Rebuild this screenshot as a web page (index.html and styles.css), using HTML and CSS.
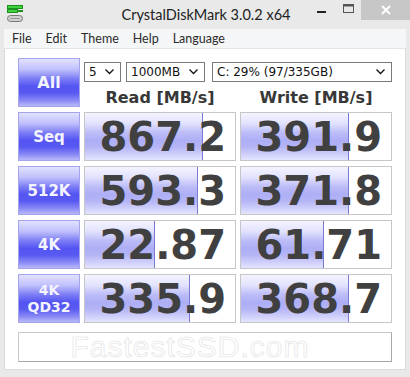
FILE: index.html
```html
<!DOCTYPE html>
<html lang="en">

<head>
  <meta charset="UTF-8">
  <title>CrystalDiskMark 3.0.2 x64</title>
  <link rel="stylesheet" href="styles.css">
</head>

<body>

  <div class="window">

    <!-- title bar -->
    <div class="titlebar">
      <span class="app-icon">
        <svg width="17" height="18" viewBox="0 0 17 18">
          <rect x="0.5" y="0.5" width="15" height="3" fill="#3fd23f" stroke="#1f8f1f" />
          <rect x="0.5" y="4.5" width="10" height="3" fill="#3fd23f" stroke="#1f8f1f" />
          <rect x="11" y="5" width="5" height="2" fill="#1f8f1f" />
          <rect x="0.5" y="10.5" width="15" height="6" rx="3" fill="#d0d0d0" stroke="#777" />
          <rect x="3" y="13" width="10" height="1" fill="#999" />
        </svg>
      </span>
      <span class="title">CrystalDiskMark 3.0.2 x64</span>
      <div class="controls">
        <span class="ctl ctl-min">
          <svg width="10" height="10" viewBox="0 0 10 10"><rect x="0" y="6" width="9" height="2" fill="#222" /></svg>
        </span>
        <span class="ctl ctl-max">
          <svg width="11" height="9" viewBox="0 0 11 9"><rect x="0.5" y="0.5" width="10" height="8" fill="none" stroke="#555" /><rect x="0.5" y="0.5" width="10" height="2" fill="#555" /></svg>
        </span>
        <span class="ctl ctl-close">
          <svg width="10" height="10" viewBox="0 0 10 10"><path d="M1 1L9 9M9 1L1 9" stroke="#fff" stroke-width="2" /></svg>
        </span>
      </div>
    </div>

    <!-- menu -->
    <div class="menubar">
      <span class="menu-item">File</span>
      <span class="menu-item">Edit</span>
      <span class="menu-item">Theme</span>
      <span class="menu-item">Help</span>
      <span class="menu-item">Language</span>
    </div>

    <!-- main panel -->
    <div class="panel">
      <div class="grid">

        <div class="btn btn-all">All</div>
        <div class="head">
          <div class="combos">
            <div class="combo combo-count">5 <svg class="chev" width="9" height="6" viewBox="0 0 9 6"><path d="M0.5 0.5L4.5 4.5L8.5 0.5" fill="none" stroke="#111" stroke-width="1.3" /></svg></div>
            <div class="combo combo-size">1000MB <svg class="chev" width="9" height="6" viewBox="0 0 9 6"><path d="M0.5 0.5L4.5 4.5L8.5 0.5" fill="none" stroke="#111" stroke-width="1.3" /></svg></div>
            <div class="combo combo-drive">C: 29% (97/335GB) <svg class="chev" width="9" height="6" viewBox="0 0 9 6"><path d="M0.5 0.5L4.5 4.5L8.5 0.5" fill="none" stroke="#111" stroke-width="1.3" /></svg></div>
          </div>
          <div class="labels">
            <span class="label">Read [MB/s]</span>
            <span class="label">Write [MB/s]</span>
          </div>
        </div>

        <div class="btn">Seq</div>
        <div class="result"><span class="bar" style="width: 117px"></span><span class="value">867.2</span></div>
        <div class="result"><span class="bar" style="width: 107px"></span><span class="value">391.9</span></div>

        <div class="btn">512K</div>
        <div class="result"><span class="bar" style="width: 112px"></span><span class="value">593.3</span></div>
        <div class="result"><span class="bar" style="width: 107px"></span><span class="value">371.8</span></div>

        <div class="btn">4K</div>
        <div class="result"><span class="bar" style="width: 69px"></span><span class="value">22.87</span></div>
        <div class="result"><span class="bar" style="width: 82px"></span><span class="value">61.71</span></div>

        <div class="btn btn-small">4K<br>QD32</div>
        <div class="result"><span class="bar" style="width: 104px"></span><span class="value">335.9</span></div>
        <div class="result"><span class="bar" style="width: 107px"></span><span class="value">368.7</span></div>

      </div>

      <div class="comment"><span class="watermark">FastestSSD.com</span></div>
    </div>

  </div>

</body>

</html>
```

FILE: styles.css
```css
:root {
  --frame: #e9e9e9;
  --text: #404040;
  --ui-font: Lato, "Noto Sans", sans-serif;
  --bold-font: "DejaVu Sans", Verdana, sans-serif;
}

html,
body {
  margin: 0px;
  padding: 0px;
  width: 410px;
  height: 377px;
  overflow: hidden;
  background-color: var(--frame);
}

.window {
  width: 410px;
  height: 377px;
  display: flex;
  flex-direction: column;
}

/* title bar */

.titlebar {
  height: 29px;
  display: flex;
  align-items: flex-start;
  position: relative;
}

.app-icon {
  margin: 5px 0 0 7px;
  height: 18px;
}

.title {
  flex: 1;
  text-align: center;
  font-family: var(--ui-font);
  font-size: 14.5px;
  line-height: 29px;
  color: #222;
  margin-left: -24px;
  padding-left: 2px;
}

.controls {
  position: absolute;
  top: 0;
  right: 0;
  display: flex;
}

.ctl {
  height: 20px;
  display: flex;
  align-items: center;
  justify-content: center;
}

.ctl-min {
  width: 26px;
}

.ctl-max {
  width: 26px;
  margin-top: -2px;
}

.ctl-close {
  width: 49px;
  background-color: #c7c7c7;
}

/* menu bar */

.menubar {
  margin: 0 4px;
  height: 19px;
  background-color: #f5f6f7;
  border-bottom: 1px solid #e4e4e4;
  display: flex;
  align-items: center;
  padding-left: 1px;
}

.menu-item {
  font-family: var(--ui-font);
  font-size: 12.5px;
  color: #2b2b2b;
  padding: 0 7px;
}

/* panel */

.panel {
  margin: 0 4px;
  height: 321px;
  background-color: #fff;
  border: 1px solid #dadada;
  border-top: none;
  box-sizing: border-box;
  padding: 9px 13px 0 13px;
}

.grid {
  display: grid;
  grid-template-columns: 62px 152px 152px;
  grid-template-rows: repeat(5, 49px);
  column-gap: 4px;
  row-gap: 5px;
}

.btn {
  box-sizing: border-box;
  border: 1px solid #a4a4ec;
  background: linear-gradient(to bottom, #e2e2ff 0%, #c0c0fc 22%, #7c7cf6 42%, #5454f2 58%, #5858f2 72%, #8888f6 88%, #b8b8fa 100%);
  display: flex;
  align-items: center;
  justify-content: center;
  text-align: center;
  font-family: var(--bold-font);
  font-weight: bold;
  font-size: 15px;
  color: #f4f4ff;
}

.btn-all {
  font-size: 16px;
}

.btn-small {
  font-size: 14px;
  line-height: 17px;
}

.head {
  grid-column: 2 / 4;
  display: flex;
  flex-direction: column;
}

.combos {
  display: flex;
  margin-top: 4px;
}

.combo {
  box-sizing: border-box;
  height: 20px;
  border: 1px solid #7a7a7a;
  background-color: #fff;
  font-family: var(--bold-font);
  font-size: 12px;
  color: #111;
  display: flex;
  align-items: center;
  justify-content: space-between;
  padding: 0 6px 0 4px;
}

.combo-count {
  width: 37px;
}

.combo-size {
  width: 79px;
  margin-left: 5px;
}

.combo-drive {
  width: 180px;
  margin-left: 7px;
}

.labels {
  display: grid;
  grid-template-columns: 152px 152px;
  column-gap: 4px;
  margin-top: 6px;
}

.label {
  text-align: center;
  font-family: var(--bold-font);
  font-weight: bold;
  font-size: 16px;
  color: #383838;
}

.result {
  position: relative;
  box-sizing: border-box;
  border: 1px solid #c6c6c6;
  background-color: #fff;
  display: flex;
  align-items: center;
  justify-content: flex-end;
  padding-right: 9px;
  overflow: hidden;
}

.bar {
  position: absolute;
  left: 0;
  top: 0;
  bottom: 0;
  border-right: 1px solid #7a7ad0;
  background: linear-gradient(to bottom, #f4f4ff 0%, #e2e2fe 22%, #bcbcf8 42%, #aeaef6 58%, #b4b4f6 72%, #cfcffb 88%, #e4e4ff 100%);
}

.value {
  position: relative;
  font-family: var(--bold-font);
  font-weight: bold;
  font-size: 40px;
  color: var(--text);
  line-height: 1;
}

.comment {
  margin-top: 9px;
  width: 374px;
  height: 30px;
  box-sizing: border-box;
  border: 1px solid #a8a8a8;
  border-top-color: #c8c8c8;
  border-left-color: #c8c8c8;
  display: flex;
  align-items: center;
  justify-content: center;
}

.watermark {
  font-family: "Liberation Sans", sans-serif;
  font-size: 30px;
  line-height: 28px;
  letter-spacing: 1px;
  color: #fff;
  -webkit-text-stroke: 0.6px #e0e0e0;
  margin-left: -30px;
}
```
